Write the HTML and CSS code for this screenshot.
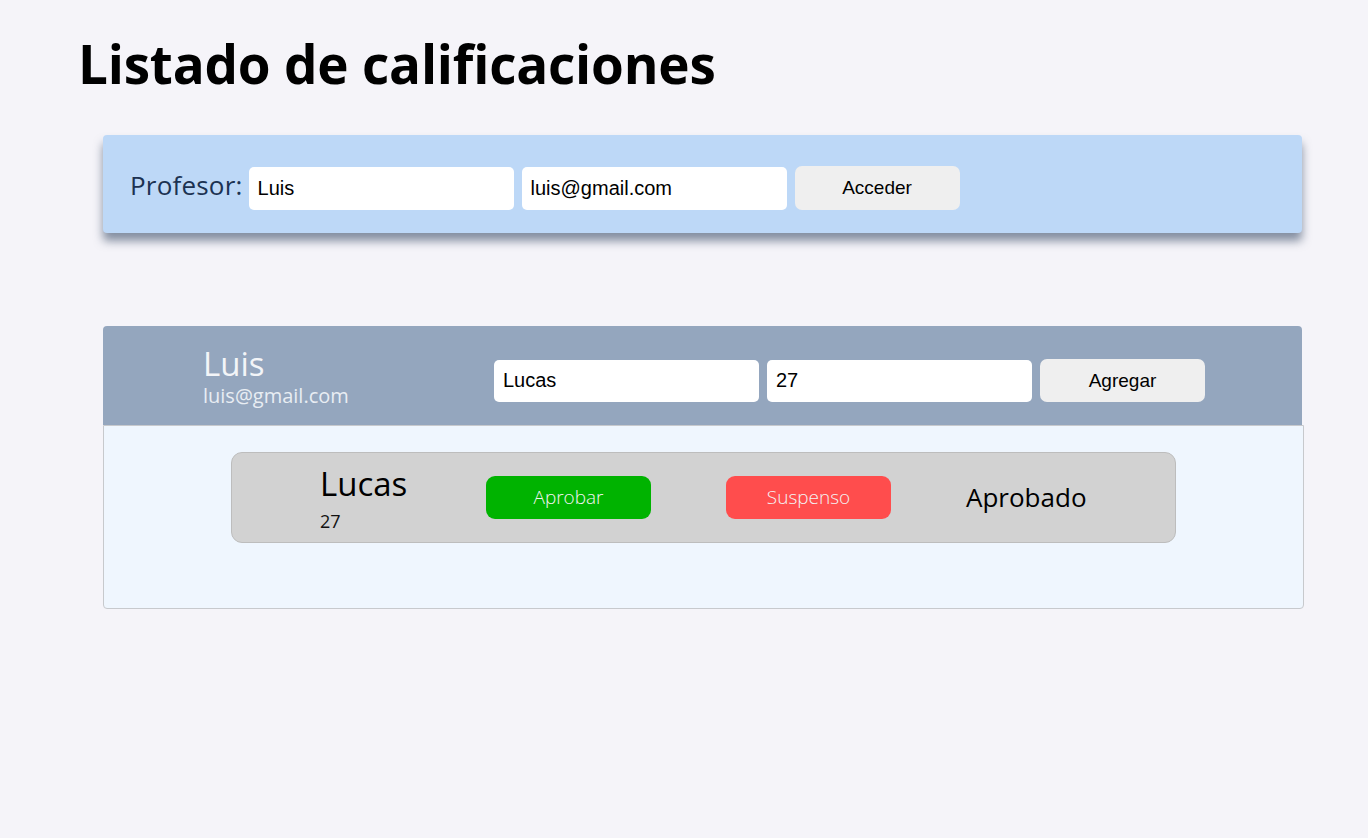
FILE: index.html
```html
<!DOCTYPE html>
<html lang="es">
<head>
<meta charset="utf-8">
<title>Listado de calificaciones</title>
<link rel="stylesheet" href="styles.css">
</head>
<body>
<main class="page">
  <h1 class="title">Listado de calificaciones</h1>

  <section class="login">
    <label class="login-label">Profesor:</label>
    <input class="field" type="text" value="Luis">
    <input class="field" type="text" value="luis@gmail.com">
    <button class="btn-light">Acceder</button>
  </section>

  <section class="teacher">
    <header class="teacher-head">
      <div class="teacher-info">
        <div class="teacher-name">Luis</div>
        <div class="teacher-mail">luis@gmail.com</div>
      </div>
      <div class="teacher-form">
        <input class="field" type="text" value="Lucas">
        <input class="field" type="text" value="27">
        <button class="btn-light">Agregar</button>
      </div>
    </header>
    <div class="teacher-body">
      <div class="student">
        <div class="student-info">
          <div class="student-name">Lucas</div>
          <div class="student-age">27</div>
        </div>
        <button class="btn-state btn-approve">Aprobar</button>
        <button class="btn-state btn-fail">Suspenso</button>
        <div class="student-status">Aprobado</div>
      </div>
    </div>
  </section>
</main>
</body>
</html>
```

FILE: styles.css
```css
html, body {
  margin: 0;
  padding: 0;
  background: #f5f4f9;
}

body {
  font-family: "Open Sans", "DejaVu Sans", sans-serif;
  width: 1368px;
  height: 838px;
  overflow: hidden;
}

.page {
  padding: 22px 0 0 0;
}

.title {
  margin: 0 0 0 78px;
  font-size: 53px;
  font-weight: 700;
  line-height: 84px;
  color: #000;
  letter-spacing: -0.2px;
}

.field {
  box-sizing: border-box;
  width: 265px;
  height: 43px;
  border: none;
  border-radius: 5px;
  background: #fff;
  padding: 0 9px;
  font-family: "Liberation Sans", Arial, sans-serif;
  font-size: 20px;
  color: #000;
  outline: none;
}

.btn-light {
  box-sizing: border-box;
  width: 165px;
  height: 44px;
  border: none;
  border-radius: 7px;
  background: #efefef;
  font-family: "Liberation Sans", Arial, sans-serif;
  font-size: 19px;
  color: #000;
  padding: 0;
}

.login {
  margin: 29px 0 0 103px;
  width: 1199px;
  height: 98px;
  box-sizing: border-box;
  background: #bdd8f7;
  border-radius: 4px;
  box-shadow: 0 8px 10px rgba(40, 60, 90, 0.55);
  display: flex;
  align-items: center;
  gap: 8px;
  padding: 8px 0 0 27px;
}

.login-label {
  font-family: "Open Sans", sans-serif;
  font-size: 26px;
  color: #1c3252;
  margin-right: -2px;
  margin-top: -6px;
  letter-spacing: 0.2px;
}

.teacher {
  margin: 93px 0 0 103px;
  width: 1201px;
}

.teacher-head {
  box-sizing: border-box;
  width: 1199px;
  height: 99px;
  background: #94a6be;
  border-radius: 4px 4px 0 0;
  display: flex;
  align-items: center;
  padding-left: 100px;
}

.teacher-info {
  width: 291px;
  color: #f3f5f8;
  margin-top: 2px;
}

.teacher-name {
  font-size: 33px;
  line-height: 38px;
}

.teacher-mail {
  font-size: 20px;
  line-height: 26px;
  color: #e8edf3;
}

.teacher-form {
  display: flex;
  align-items: center;
  gap: 8px;
  margin-top: 10px;
}

.teacher-form .field {
  height: 42px;
}

.teacher-form .btn-light {
  height: 43px;
}

.teacher-body {
  box-sizing: border-box;
  height: 184px;
  background: #eff6fe;
  border: 1px solid #c7c9cd;
  border-radius: 0 0 4px 4px;
  padding: 26px 127px 0 127px;
}

.student {
  box-sizing: border-box;
  height: 91px;
  background: #d2d2d2;
  border: 1px solid #bdbdbd;
  border-radius: 11px;
  display: flex;
  align-items: center;
  padding-left: 88px;
}

.student-info {
  width: 166px;
  color: #000;
  margin-top: -1px;
}

.student-name {
  font-size: 33px;
  line-height: 46px;
}

.student-age {
  font-size: 18px;
  line-height: 24px;
  margin-top: 2px;
  color: #111;
}

.btn-state {
  box-sizing: border-box;
  width: 165px;
  height: 43px;
  border: none;
  border-radius: 9px;
  font-family: "Open Sans", sans-serif;
  font-size: 19px;
  font-weight: 300;
  color: #f4f4f4;
  padding: 0;
  margin-top: -1px;
}

.btn-approve {
  background: #00b300;
  margin-right: 75px;
}

.btn-fail {
  background: #ff4d4d;
  margin-right: 75px;
}

.student-status {
  font-size: 26px;
  color: #000;
  margin-top: -1px;
}
```
